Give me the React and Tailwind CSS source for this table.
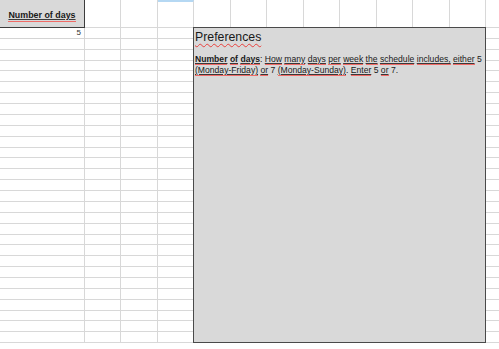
const COLS = 12;
const ROWS = 30;

// grid line positions (px) of the sheet, as seen in the picture
const colLines = Array.from({ length: COLS }, (_, i) =>
  i === 0 ? 84 : Math.round(84 + i * 36.45)
);
const rowLines = Array.from({ length: ROWS }, (_, i) =>
  Math.round(27 + i * 10.87)
);

// underlined word with the spell checker's red line under it
function Word({ children }) {
  return (
    <span className="border-b border-[#f06a66]">
      <span className="underline decoration-[#3a3a3a] underline-offset-[1px]">{children}</span>
    </span>
  );
}

function Cell({ r, c, w, h }) {
  if (r === 0 && c === 0) {
    return (
      <div
        className="shrink-0 flex items-center justify-center pt-[5px] bg-[#d9d9d9] border-r border-b border-[#3c3c3c] text-[8.9px] leading-[11px] font-bold text-[#1a1a1a]"
        style={{ width: w, height: h }}
      >
        <Word>Number of days</Word>
      </div>
    );
  }
  if (r === 1 && c === 0) {
    return (
      <div
        className="shrink-0 flex items-start justify-end pr-[3px] border-r border-b border-[#d4d4d4] text-[8px] leading-[10px] text-[#333]"
        style={{ width: w, height: h }}
      >
        5
      </div>
    );
  }
  return (
    <div
      className={
        "shrink-0 border-r border-b border-[#d8d8d8]" +
        (r === 0 && c === 3 ? " border-t-2 border-t-[#b5d8f3]" : "")
      }
      style={{ width: w, height: h }}
    />
  );
}

export default function App() {
  return (
    <div className="relative w-[499px] h-[349px] overflow-hidden bg-white font-['Liberation_Sans',Arial,sans-serif]">
      <div className="flex flex-col">
        {rowLines.map((line, r) => {
          const h = r === 0 ? line + 1 : line - rowLines[r - 1];
          return (
            <div key={r} className="flex">
              {colLines.map((cl, c) => {
                const w = c === 0 ? cl + 1 : cl - colLines[c - 1];
                return <Cell key={c} r={r} c={c} w={w} h={h} />;
              })}
              <div className="shrink-0 w-[40px] border-b border-[#d8d8d8]" style={{ height: h }} />
            </div>
          );
        })}
      </div>

      {/* text box shape lying over the cells */}
      <div className="absolute left-[193px] top-[27px] w-[293px] h-[316px] border border-[#4a4a4a] bg-[#d9d9d9] px-[1px] text-[#1a1a1a]">
        <div className="text-[12.3px] leading-[15px] mt-[2px]">
          <span className="underline decoration-wavy decoration-[#e8403c] decoration-1 underline-offset-[2px]">
            Preferences
          </span>
        </div>
        <p className="mt-[9px] text-[8.6px] leading-[11px]">
          <span className="font-bold">
            <Word>Number</Word> <Word>of</Word> <Word>days</Word>
          </span>
          : <Word>How</Word> <Word>many</Word> <Word>days</Word> <Word>per</Word>{" "}
          <Word>week</Word> <Word>the</Word> <Word>schedule</Word>{" "}
          <Word>includes,</Word> <Word>either</Word> 5 <Word>(Monday-Friday)</Word>{" "}
          <Word>or</Word> 7 <Word>(Monday-Sunday)</Word>. <Word>Enter</Word> 5{" "}
          <Word>or</Word> 7.
        </p>
      </div>
    </div>
  );
}
